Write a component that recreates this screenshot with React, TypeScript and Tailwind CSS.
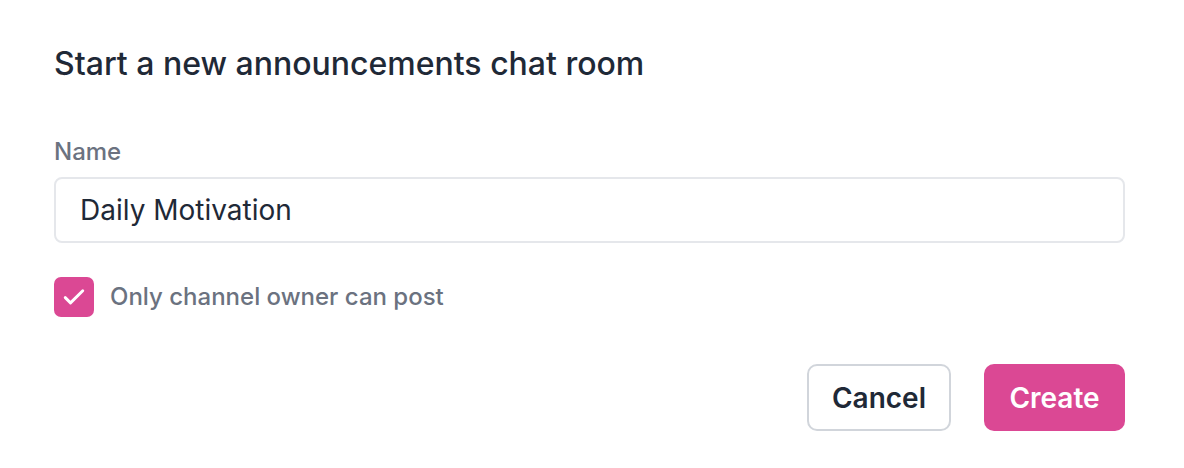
import { useState } from "react";

const App = () => {
  const [name, setName] = useState("Daily Motivation");
  const [ownerOnly, setOwnerOnly] = useState(true);

  return (
    <div
      className="min-h-screen bg-white pl-[54px] pr-[59px] pt-[44px]"
      style={{ fontFamily: "Inter, 'Noto Sans', sans-serif" }}
    >
      <h2 className="text-[32px] leading-[40px] font-medium text-[#1f2937]">
        Start a new announcements chat room
      </h2>

      <div className="mt-[52px]">
        <label className="block text-[24px] leading-[32px] font-medium text-[#6b7280]">Name</label>
        <input
          value={name}
          onChange={(e) => setName(e.target.value)}
          className="mt-[9px] w-full h-[66px] rounded-[8px] border-2 border-[#e5e7eb] px-[24px] text-[28px] text-[#1f2937] outline-none"
        />
      </div>

      <label className="mt-[34px] flex items-center gap-[16px] cursor-pointer">
        <button
          type="button"
          onClick={() => setOwnerOnly(!ownerOnly)}
          className={
            ownerOnly
              ? "h-[40px] w-[40px] rounded-[7px] bg-[#db4894] flex items-center justify-center"
              : "h-[40px] w-[40px] rounded-[7px] border-2 border-[#d1d5db] bg-white"
          }
        >
          {ownerOnly && (
            <svg width="30" height="30" viewBox="0 0 24 24" fill="none">
              <path d="M5 12.5l4.2 4.2L19 7" stroke="white" strokeWidth="2.3" strokeLinecap="round" strokeLinejoin="round" />
            </svg>
          )}
        </button>
        <span className="text-[24px] leading-[32px] font-medium text-[#6b7280]">Only channel owner can post</span>
      </label>

      <div className="mt-[47px] flex justify-end gap-[33px]">
        <button className="h-[67px] w-[144px] rounded-[10px] border-2 border-[#d1d5db] bg-white text-[28px] font-semibold text-[#1f2937]">
          Cancel
        </button>
        <button className="h-[67px] w-[141px] rounded-[10px] bg-[#db4894] text-[28px] font-semibold text-white">
          Create
        </button>
      </div>
    </div>
  );
};

export default App;
